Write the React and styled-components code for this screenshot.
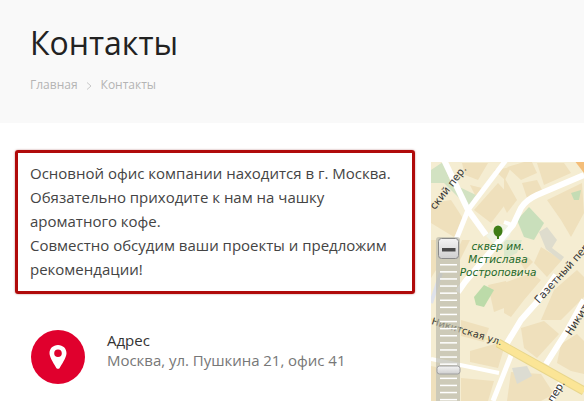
import React from "react";
import styled, { createGlobalStyle } from "styled-components";

const Global = createGlobalStyle`
  html, body { margin: 0; padding: 0; background: #fff; overflow: hidden; }
  body { font-family: "Open Sans", "Noto Sans", sans-serif; }
`;
const Page = styled.div`width: 584px; height: 401px; overflow: hidden;`;
const Hero = styled.header`
  height: 123px; background: #f9f9f9; padding: 0 30px; box-sizing: border-box;
`;
const Title = styled.h1`
  margin: 0; padding-top: 21px; font-size: 32px; line-height: 44px; font-weight: 400; color: #222;
`;
const Crumbs = styled.nav`
  display: flex; align-items: center; margin-top: 11px; font-size: 12px; line-height: 18px; color: #b4b4b4;
`;
const Sep = styled.svg`width: 6px; height: 8px; margin: 1px 9px 0 8px;`;
const Main = styled.main`display: flex; align-items: flex-start; padding: 27px 0 0 15px;`;
const Left = styled.section`width: 400px; flex: none;`;
const Notice = styled.div`
  box-sizing: border-box; height: 144px; border: 3px solid #b00a0a; border-radius: 3px;
  padding: 8px 12px; font-size: 15px; line-height: 24px; color: #444;
  box-shadow: 0 0 2px rgba(120,0,0,.5);
`;
const Contact = styled.div`display: flex; align-items: center; margin: 36px 0 0 16px; gap: 22px;`;
const Badge = styled.div`
  width: 54px; height: 54px; border-radius: 50%; background: #e0002d;
  display: flex; align-items: center; justify-content: center; flex: none;
`;
const ContactText = styled.div`margin-top: -12px;`;
const Label = styled.div`font-size: 15px; line-height: 19px; color: #333;`;
const Value = styled.div`font-size: 15px; line-height: 21px; color: #777; letter-spacing: -0.03px;`;
const MapBox = styled.div`width: 153px; height: 239px; margin: 12px 0 0 16px; flex: none;`;
const MapSvg = styled.svg`display: block; width: 153px; height: 239px;`;

const Road = ({ d, w = 6, c = "#fff" }) => <path d={d} fill="none" stroke={c} strokeWidth={w} strokeLinejoin="round" />;
const blocks = [
  "M462 163h26l-10 17-13-5z","M470 185l12 3-6 9z","M474 210l24-27 13 14-20 26z","M494 170l17-3-6 13z",
  "M431 203l20-3 13 20-10 17-23-14z","M507 167l24-7 6 13-16 7z","M522 183l15-3 5 10-15 8z","M537 163h27l7 10-27 12z",
  "M547 200l35-17 2 30-13 24-10-17z","M504 177l13 23-10 13-3-6z","M504 283l27-10 10 7-17 20-13 17-7-4z",
  "M541 247l21 13-15 17-13-14z","M554 290l23-20 7 7v20l-23 23h-20z","M521 328l23-7 15 13-22 24-13-10z",
  "M561 344l16-10 7 7v33l-13-3-14-8z","M511 372l30 2 13 20-13 7h-34z","M470 351l28-8 7 2-7 23-28-6z",
  "M461 378l33 3-6 20h-27z","M431 366l5 1v34h-5z","M461 320l28 8-5 14-23-6z","M488 285l18-4 6 24-18 7z",
  "M431 240h5v30l-5 8z","M462 240l8 0-10 20-3-8z","M520 262l8-5 5 5-8 8z","M566 205l10-4 4 10-10 4z",
];

function MapDrawing() {
  return (
    <MapSvg viewBox="431 162 153 239" aria-label="map">
      <rect x="431" y="162" width="153" height="239" fill="#f5edd2" />
      {blocks.map((d, i) => <path key={i} d={d} fill="#efe0bc" />)}
      <path d="M431 170l12-8 8 21 25 12-8 12-24-24-13 0z" fill="#d2e2c2" />
      <path d="M517 220l12-13 15 16-10 17-10-3z" fill="#c9dfbb" />
      <path d="M504 240h18l-5 13-13 6z" fill="#dce8cc" />
      <path d="M474 297l10-12 10 5-10 17-8-2z" fill="#bcdba9" />
      <path d="M571 193l10-3-2 10-5 0z" fill="#c4dcb4" />
      <path d="M486 236l12-12 14 2-2 10-12 12z" fill="#f0f3e4" />
      <path d="M539 232l8-5 10 13-5 8 12 9-3 4-15-12z" fill="#dedccd" />
      <path d="M512 368l15-2 5 10-15 8z" fill="#dcdcd2" />
      <path d="M574 160h10v13z" fill="#f4bd78" />
      <Road d="M444 160L468 210L486 235" />
      <Road d="M506 160L468 210L456 240" w={5} />
      <Road d="M584 175L537 195Q526 200 521 208L513 225L465 282L458 292" />
      <Road d="M504 222L512 225" w={4} />
      <Road d="M556 275L537 302L521 320L504 348" />
      <Road d="M512 353L493 401" w={5} />
      <Road d="M584 300L567 331L546 364" />
      <Road d="M562 381L551 401" />
      <Road d="M431 359L499 373" w={4} />
      <Road d="M441 273L431 303" w={4} c="#dfe2ea" />
      <Road d="M431 319L498 343" w={2} c="#f2e8b4" />
      <Road d="M498 343L584 391" w={9} c="#e8d68c" />
      <Road d="M498 343L584 391" w={7} c="#fbe596" />
      <g fill="#3f7d16">
        <ellipse cx="498" cy="231" rx="4.500" ry="5.500" />
        <rect x="497" y="234" width="2" height="5" />
      </g>
      <g fontFamily="'DejaVu Sans', sans-serif" fontStyle="italic" fontSize="10.5" fill="#1e6a2a" textAnchor="middle">
        <text x="498" y="250">сквер им.</text>
        <text x="498" y="263">Мстислава</text>
        <text x="498" y="276">Ростроповича</text>
      </g>
      <g fontFamily="'DejaVu Sans', sans-serif" fontSize="10.5" fill="#333">
        <text textAnchor="end" transform="translate(467 169) rotate(-52)">ский пер.</text>
        <text transform="translate(539 304) rotate(-48)">Газетный пер.</text>
        <text fontSize="9.8" transform="translate(431 324) rotate(17)">Никитская ул.</text>
        <text transform="translate(571 336) rotate(-58)">Никитский</text>
        <text transform="translate(553 403) rotate(-58)">пер.</text>
      </g>
      <rect x="436" y="237" width="24" height="170" rx="3" fill="#b4b4a8" opacity=".62" />
      <g fill="#fff">
        {Array.from({ length: 20 }, (_, i) => <rect key={i} x="440" y={264 + i * 7.1} width="17" height="1.500" />)}
      </g>
      <defs>
        <linearGradient id="btn" x1="0" y1="0" x2="0" y2="1">
          <stop offset="0" stopColor="#f4f4f4" />
          <stop offset="1" stopColor="#cfcfcf" />
        </linearGradient>
      </defs>
      <rect x="438.5" y="238.5" width="20" height="20" rx="3" fill="url(#btn)" stroke="#8a8a8a" />
      <rect x="442" y="248" width="13.500" height="3.500" fill="#4a4a4a" />
      <rect x="437" y="366" width="23" height="8" rx="2.500" fill="url(#btn)" stroke="#a0a0a0" />
    </MapSvg>
  );
}

export default function App() {
  return (
    <Page>
      <Global />
      <Hero>
        <Title>Контакты</Title>
        <Crumbs>
          <span>Главная</span>
          <Sep viewBox="0 0 6 8"><path d="M1 .5L5 4L1 7.5" fill="none" stroke="#c8c8c8" /></Sep>
          <span>Контакты</span>
        </Crumbs>
      </Hero>
      <Main>
        <Left>
          <Notice>
            Основной офис компании находится в г. Москва.<br />
            Обязательно приходите к нам на чашку<br />
            ароматного кофе.<br />
            Совместно обсудим ваши проекты и предложим<br />
            рекомендации!
          </Notice>
          <Contact>
            <Badge>
              <svg width="18" height="24" viewBox="0 0 18 24">
                <path fillRule="evenodd" fill="#fff" d="M9 0C4 0 .5 3.6.5 8.2c0 4.6 5.500 12 7 15 .7 .7 2.300 .7 3 0 1.500-3 7-10.400 7-15C17.500 3.600 14 0 9 0zM9 4.500a3.800 3.800 0 1 1 0 7.600a3.800 3.800 0 0 1 0-7.600z" />
              </svg>
            </Badge>
            <ContactText>
              <Label>Адрес</Label>
              <Value>Москва, ул. Пушкина 21, офис 41</Value>
            </ContactText>
          </Contact>
        </Left>
        <MapBox><MapDrawing /></MapBox>
      </Main>
    </Page>
  );
}
